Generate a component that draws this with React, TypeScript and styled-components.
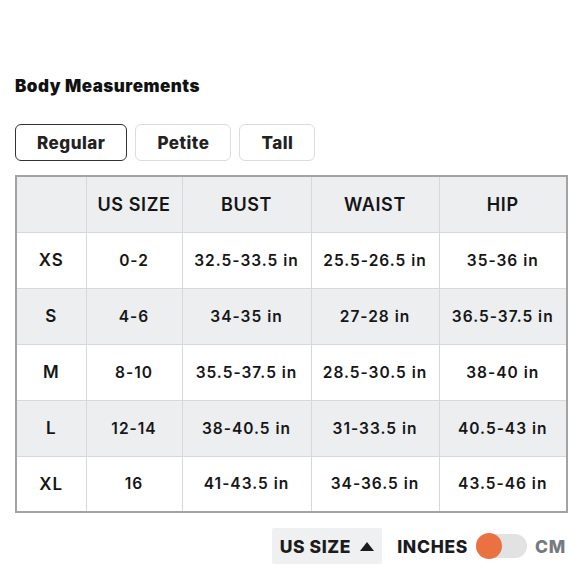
import React, { useState } from 'react'
import styled, { createGlobalStyle } from 'styled-components'

const GlobalStyle = createGlobalStyle`
  html, body {
    margin: 0;
    padding: 0;
    background: #ffffff;
  }
  body {
    font-family: Inter, "Liberation Sans", sans-serif;
    color: #1a1a1a;
  }
`

const Page = styled.div`
  width: 580px;
  height: 580px;
  box-sizing: border-box;
  padding: 75px 14px 0 15px;
  display: flex;
  flex-direction: column;
  overflow: hidden;
`

const Title = styled.h2`
  margin: 0;
  font-size: 17px;
  font-weight: 900;
  letter-spacing: 0.5px;
  line-height: 22px;
  color: #111;
`

const Tabs = styled.div`
  display: flex;
  gap: 8px;
  margin-top: 27px;
`

const Tab = styled.button<{ $active?: boolean }>`
  height: 37px;
  box-sizing: border-box;
  padding: 0 21px;
  border-radius: 6px;
  background: #fff;
  border: ${({ $active }) => ($active ? '1.5px solid #333' : '1px solid #dcdcdc')};
  font-family: inherit;
  font-size: 17px;
  font-weight: 800;
  letter-spacing: 0.5px;
  color: #222;
  cursor: pointer;
`

const Table = styled.table`
  margin-top: 14px;
  width: 551px;
  border-collapse: collapse;
  border: 2px solid #a3a3a3;
  table-layout: fixed;
`

const Row = styled.tr<{ $shade: boolean }>`
  height: 56px;
  background: ${({ $shade }) => ($shade ? '#eceef0' : '#ffffff')};
`

const HeadCell = styled.th`
  border: 1px solid #d8d8d8;
  font-size: 18px;
  font-weight: 600;
  letter-spacing: 0.6px;
  color: #151515;
  text-align: center;
  padding: 0;
`

const Cell = styled.td<{ $first?: boolean }>`
  border: 1px solid #d8d8d8;
  font-size: ${({ $first }) => ($first ? '17px' : '15.5px')};
  font-weight: 600;
  letter-spacing: 1px;
  color: #161616;
  text-align: center;
  padding: 0;
`

const Footer = styled.div`
  display: flex;
  align-items: center;
  justify-content: flex-end;
  margin-top: 15px;
  gap: 15px;
`

const SortButton = styled.button`
  display: flex;
  align-items: center;
  gap: 9px;
  height: 36px;
  padding: 0 8px 0 8px;
  border: none;
  border-radius: 2px;
  background: #eff0f1;
  font-family: inherit;
  font-size: 17.5px;
  font-weight: 800;
  letter-spacing: 0.6px;
  color: #1c1c1c;
`

const UnitGroup = styled.div`
  display: flex;
  align-items: center;
  gap: 8px;
`

const UnitLabel = styled.span<{ $muted?: boolean }>`
  font-size: 17.5px;
  font-weight: 800;
  letter-spacing: 0.7px;
  color: ${({ $muted }) => ($muted ? '#777b80' : '#1c1c1c')};
`

const Switch = styled.div`
  position: relative;
  width: 51px;
  height: 24px;
  border-radius: 12px;
  background: #e2e2e2;
`

const Knob = styled.div<{ $on: boolean }>`
  position: absolute;
  top: -1px;
  left: ${({ $on }) => ($on ? '25px' : '0')};
  width: 26px;
  height: 26px;
  border-radius: 50%;
  background: #ea7242;
`

const columns = ['', 'US SIZE', 'BUST', 'WAIST', 'HIP']
const widths = [70, 96, 129, 128, 128]

const rows = [
  ['XS', '0-2', '32.5-33.5 in', '25.5-26.5 in', '35-36 in'],
  ['S', '4-6', '34-35 in', '27-28 in', '36.5-37.5 in'],
  ['M', '8-10', '35.5-37.5 in', '28.5-30.5 in', '38-40 in'],
  ['L', '12-14', '38-40.5 in', '31-33.5 in', '40.5-43 in'],
  ['XL', '16', '41-43.5 in', '34-36.5 in', '43.5-46 in'],
]

export default function App() {
  const [fit, setFit] = useState('Regular')
  const [cm, setCm] = useState(false)

  return (
    <>
      <GlobalStyle />
      <Page>
        <Title>Body Measurements</Title>
        <Tabs>
          {['Regular', 'Petite', 'Tall'].map((t) => (
            <Tab key={t} $active={fit === t} onClick={() => setFit(t)}>
              {t}
            </Tab>
          ))}
        </Tabs>
        <Table>
          <colgroup>
            {widths.map((w, i) => (
              <col key={i} style={{ width: w }} />
            ))}
          </colgroup>
          <thead>
            <Row $shade>
              {columns.map((c, i) => (
                <HeadCell key={i}>{c}</HeadCell>
              ))}
            </Row>
          </thead>
          <tbody>
            {rows.map((r, i) => (
              <Row key={r[0]} $shade={i % 2 === 1}>
                {r.map((v, j) => (
                  <Cell key={j} $first={j === 0}>
                    {v}
                  </Cell>
                ))}
              </Row>
            ))}
          </tbody>
        </Table>
        <Footer>
          <SortButton>
            US SIZE
            <svg width="14" height="9" viewBox="0 0 14 9">
              <path d="M7 0 L14 9 L0 9 Z" fill="#1c1c1c" />
            </svg>
          </SortButton>
          <UnitGroup>
            <UnitLabel>INCHES</UnitLabel>
            <Switch onClick={() => setCm(!cm)}>
              <Knob $on={cm} />
            </Switch>
            <UnitLabel $muted>CM</UnitLabel>
          </UnitGroup>
        </Footer>
      </Page>
    </>
  )
}
